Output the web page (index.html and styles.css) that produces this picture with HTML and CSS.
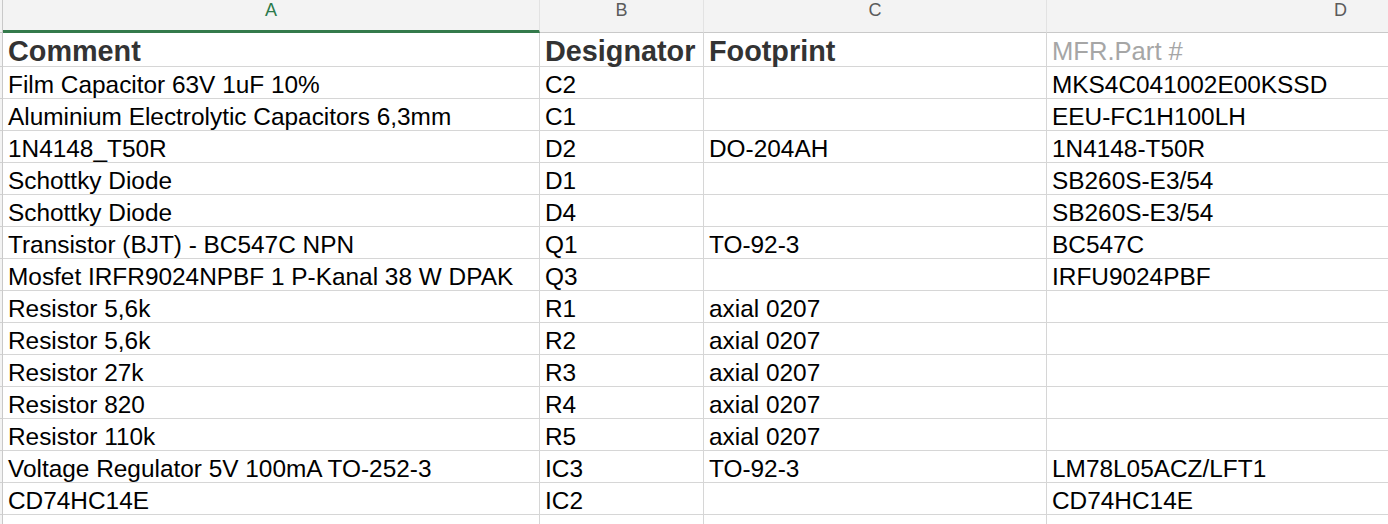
FILE: index.html
```html
<!DOCTYPE html>
<html>
<head>
<meta charset="utf-8">
<link rel="stylesheet" href="styles.css">
</head>
<body>
<div class="sheet">
  <div class="grid">
    <div class="ch rn"></div>
    <div class="ch sel">A</div>
    <div class="ch">B</div>
    <div class="ch">C</div>
    <div class="ch">D</div>

    <div class="rn hrow"></div>
    <div class="c h">Comment</div>
    <div class="c h">Designator</div>
    <div class="c h">Footprint</div>
    <div class="c h mfr">MFR.Part #</div>

    <div class="rn"></div><div class="c">Film Capacitor 63V 1uF 10%</div><div class="c">C2</div><div class="c"></div><div class="c">MKS4C041002E00KSSD</div>
    <div class="rn"></div><div class="c">Aluminium Electrolytic Capacitors 6,3mm</div><div class="c">C1</div><div class="c"></div><div class="c">EEU-FC1H100LH</div>
    <div class="rn"></div><div class="c">1N4148_T50R</div><div class="c">D2</div><div class="c">DO-204AH</div><div class="c">1N4148-T50R</div>
    <div class="rn"></div><div class="c">Schottky Diode</div><div class="c">D1</div><div class="c"></div><div class="c">SB260S-E3/54</div>
    <div class="rn"></div><div class="c">Schottky Diode</div><div class="c">D4</div><div class="c"></div><div class="c">SB260S-E3/54</div>
    <div class="rn"></div><div class="c">Transistor (BJT) - BC547C NPN</div><div class="c">Q1</div><div class="c">TO-92-3</div><div class="c">BC547C</div>
    <div class="rn"></div><div class="c">Mosfet IRFR9024NPBF 1 P-Kanal 38 W DPAK</div><div class="c">Q3</div><div class="c"></div><div class="c">IRFU9024PBF</div>
    <div class="rn"></div><div class="c">Resistor 5,6k</div><div class="c">R1</div><div class="c">axial 0207</div><div class="c"></div>
    <div class="rn"></div><div class="c">Resistor 5,6k</div><div class="c">R2</div><div class="c">axial 0207</div><div class="c"></div>
    <div class="rn"></div><div class="c">Resistor 27k</div><div class="c">R3</div><div class="c">axial 0207</div><div class="c"></div>
    <div class="rn"></div><div class="c">Resistor 820</div><div class="c">R4</div><div class="c">axial 0207</div><div class="c"></div>
    <div class="rn"></div><div class="c">Resistor 110k</div><div class="c">R5</div><div class="c">axial 0207</div><div class="c"></div>
    <div class="rn"></div><div class="c">Voltage Regulator 5V 100mA TO-252-3</div><div class="c">IC3</div><div class="c">TO-92-3</div><div class="c">LM78L05ACZ/LFT1</div>
    <div class="rn"></div><div class="c">CD74HC14E</div><div class="c">IC2</div><div class="c"></div><div class="c">CD74HC14E</div>
    <div class="rn"></div><div class="c"></div><div class="c"></div><div class="c"></div><div class="c"></div>
  </div>
</div>
</body>
</html>
```

FILE: styles.css
```css
html, body {
  margin: 0;
  padding: 0;
  background: #ffffff;
}
.sheet {
  width: 1388px;
  height: 524px;
  overflow: hidden;
}
.grid {
  display: grid;
  grid-template-columns: 3px 537px 164px 343px 588px;
  grid-template-rows: 33px 34px;
  grid-auto-rows: 32px;
  width: 1635px;
  font-family: "Liberation Sans", Arial, Helvetica, sans-serif;
}
.ch {
  box-sizing: border-box;
  background: #f3f3f3;
  border-right: 1px solid #e2e2e2;
  border-bottom: 1px solid #c9c9c9;
  color: #5b5b5b;
  font-size: 18px;
  line-height: 20px;
  text-align: center;
}
.ch.sel {
  color: #2b7a4b;
  border-bottom: 3px solid #347a4b;
}
.rn {
  box-sizing: border-box;
  background: #f3f3f3;
  border-right: 1px solid #c9c9c9;
  border-bottom: 1px solid #d0d0d0;
}
.ch.rn {
  border-bottom: 1px solid #c9c9c9;
}
.c {
  box-sizing: border-box;
  border-right: 1px solid #d6d6d6;
  border-bottom: 1px solid #d6d6d6;
  display: flex;
  align-items: flex-end;
  padding-left: 5px;
  font-size: 24.4px;
  line-height: 26px;
  color: #000;
  white-space: nowrap;
  overflow: visible;
}
.c.h {
  font-weight: bold;
  font-size: 28.8px;
  line-height: 30px;
  color: #333333;
}
.c.h.mfr {
  font-weight: normal;
  font-size: 25.6px;
  color: #a6a6a6;
}
```
